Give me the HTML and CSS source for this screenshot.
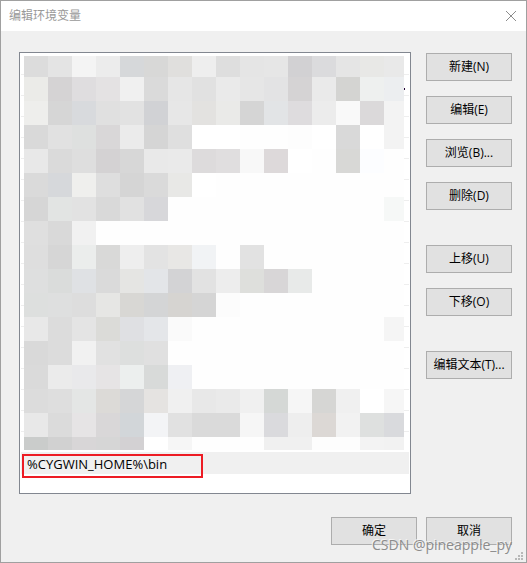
FILE: index.html
```html
<!DOCTYPE html>
<html lang="zh-CN">
<head>
    <meta charset="UTF-8">
    <title>编辑环境变量</title>
    <link rel="stylesheet" href="styles.css">
</head>
<body>
    <div class="window">
        <header class="title-bar">
            <h1>编辑环境变量</h1>
            <button type="button" class="close" aria-label="关闭">
                <svg width="12" height="12" viewBox="0 0 12 12">
                    <path d="M1 1L11 11M11 1L1 11" stroke="#8c8c8c" stroke-width="1" fill="none"/>
                </svg>
            </button>
        </header>

        <main class="content">
            <div class="list">
                <div class="hidden-rows">
                    <div class="mosaic" id="mosaic"></div>
                    <span class="speck"></span>
                </div>
                <ul class="entries">
                    <li class="selected">%CYGWIN_HOME%\bin<span class="highlight"></span></li>
                </ul>
            </div>

            <div class="actions">
                <div class="group">
                    <button type="button">新建(N)</button>
                    <button type="button">编辑(E)</button>
                    <button type="button">浏览(B)...</button>
                    <button type="button">删除(D)</button>
                </div>
                <div class="group">
                    <button type="button">上移(U)</button>
                    <button type="button">下移(O)</button>
                </div>
                <div class="group">
                    <button type="button">编辑文本(T)...</button>
                </div>
            </div>
        </main>

        <footer class="footer">
            <button type="button">确定</button>
            <button type="button">取消</button>
        </footer>

        <span class="watermark">CSDN @pineapple_py</span>
        <svg class="grip" width="8" height="8" viewBox="0 0 8 8" fill="#b8b8b8">
            <path d="M6 0h2v2h-2zM3 3h2v2h-2zM6 3h2v2h-2zM0 6h2v2h-2zM3 6h2v2h-2zM6 6h2v2h-2z"/>
        </svg>
    </div>

    <script src="mosaic.js"></script>
</body>
</html>
```
FILE: styles.css
```css
* {
    box-sizing: border-box;
}
body {
    margin: 0;
    font-family: "Open Sans", "Noto Sans CJK SC", sans-serif;
    font-size: 12px;
    line-height: 16px;
    color: #000;
}
.window {
    position: relative;
    display: flex;
    flex-direction: column;
    min-height: 100vh;
    border: 1px solid #a0a0a0;
    background-color: #f0f0f0;
}
.title-bar {
    display: flex;
    align-items: center;
    justify-content: space-between;
    height: 30px;
    padding: 0 9px 0 8px;
    background-color: #fff;
}
h1 {
    margin: 0;
    font-size: 12px;
    font-weight: normal;
    color: #999;
}
button {
    width: 86px;
    height: 28px;
    padding: 0;
    border: 1px solid #adadad;
    background-color: #e1e1e1;
    font: inherit;
    color: #000;
    white-space: nowrap;
}
button:hover {
    border-color: #0078d7;
    background-color: #e5f1fb;
}
.close,
.close:hover {
    display: flex;
    width: 12px;
    height: 12px;
    border: none;
    background: none;
}
.content {
    display: flex;
    flex: 1;
    gap: 15px;
    padding: 21px 14px 0 18px;
}
.list {
    flex: 1;
    min-width: 0;
    padding: 1px;
    border: 1px solid #828790;
    background-color: #fff;
}
.hidden-rows {
    position: relative;
    padding: 2px 5px 2px 3px;
    background: repeating-linear-gradient(#fff 0, #fff 20px, #eee 20px, #eee 21px);
}
.mosaic {
    display: grid;
    grid-template-columns: repeat(15, 24fr) 20fr;
    grid-template-rows: 21px repeat(15, 24px) 13px;
}
.speck {
    position: absolute;
    top: 34px;
    right: 4px;
    width: 1px;
    height: 2px;
    background-color: #203;
}
.entries {
    margin: 0;
    padding: 0;
    list-style: none;
}
.selected {
    position: relative;
    height: 22px;
    padding: 4px 6px;
    background-color: #f0f0f0;
    font-size: 13px;
}
.highlight {
    position: absolute;
    top: 2px;
    left: 1px;
    width: 181px;
    height: 24px;
    border: 2px solid #ed1c24;
}
.actions {
    display: flex;
    flex-direction: column;
    gap: 35px;
    padding-top: 1px;
}
.group {
    display: flex;
    flex-direction: column;
    gap: 15px;
}
.footer {
    display: flex;
    justify-content: flex-end;
    gap: 9px;
    padding: 23px 14px 17px;
}
.watermark {
    position: absolute;
    right: 14px;
    bottom: 7px;
    font-size: 14px;
    line-height: 20px;
    color: #8c8c8c;
    text-shadow: -1px -1px 0 #f4f4f4;
}
.grip {
    position: absolute;
    right: 3px;
    bottom: 2px;
}
```
FILE: mosaic.js
```js
// one line per row of blocks, missing blocks on the right are near white
const rows = [
    'dcdcdc e4e4e4 f4f4f4 ececec d6d8da d8d8d7 e0dfdd eeeeee dedede e5e5e5 e6e6e6 d2d1d3 dbdbdd e5e5e5 e8e8e6 e9e9e9',
    'ebebe8 d5d3d4 dfdddf e4e2e3 f0f0f0 dadada e6e6e6 e1e1e1 eaeaea e6e6e6 e3e3e4 d5d3d4 eaeaea d4d4d2 eef0ef eceef0',
    'eeeeec d6d6d6 d8dadd e0e0e0 e2e2e2 d1d2d5 e7e7e7 e3e2e0 eaeae8 d5d5d5 e2e4e6 dedcde ececec f9f9f9 dbd9da f3f3f3',
    'd9d9d9 e1e1e1 dee0df d9d7d8 ebebeb d5d5d5 dfdfdf ffffff ffffff fefefe fefefe fdfdfd ffffff d9d9d9 ffffff f3f3f3',
    'e8e8e8 dadada dedede d4d2d3 d7d7d7 e9e9e9 eaeaea dddbdc e0dedf f8f8f8 ddd9da ffffff fefefe d8d8d6 fcfdff fefefe',
    'dadada d6d8db efefed dedede d5d5d5 dadada e8e8e6 ffffff',
    'd6d6d6 e2e4e3 e2e2e2 d9d9d9 e1e1e1 d7d7da fefefe fefefe fefefe fefefe fefefe fefefe fefefe fefefe fefefe f6f8f7',
    'dfdfdf d9d9d9 f1f1f1',
    'dedede d6d6d6 ebedec d9d9d8 eeeeee e3e3e3 e8e7e5 f1f3f5 fefefe e2e2e2',
    'dedfdf dadcdb dfe1e4 dadada e5e5e3 e3e5e8 d3d3d5 e2e2e2 ededed dedfdc d8d6d7 e8eae9',
    'dddfde dedfdf dddddd e6e6e4 d8d7d4 d4d5d6 d6d4d1 d5d5d5 fcfcfc',
    'e8e8e8 dcdcdc e4e4e4 dbdbd8 dfe0e3 e4e6e9 fafafa fefefe fefefe fefefe fefefe fefefe fefefe fefefe fefefe f5f5f5',
    'd9d9d9 dcdcdc f1f1f1 e1e1e1 dddfde e0e0e0',
    'dadada ebebeb e9e9eb e6e4e5 ecefee d8dad9 eff0f3',
    'dcdcdc dedede e4e6e5 dcdad7 d5d6d7 e5e3e1 f0f0f0 e8e8e8 eaeaea f0f0f0 d5d8d6 f6f6f6 d6d6d4 f0f0f0 ffffff f6f6f6',
    'e8e8e8 dbdbdb e6e4e5 d9d7d8 d2d6d9 f3f4f6 e1e1e1 dadada dadada f6f6f6 dadadd eeeeee dcd8d5 f2f2f2 dee0df d9dadd',
    'cacccb d1d1d1 d8d6d7 d6d6d6 d3d1d3 ffffff f6f6f6 fefefe fefefe fefefe f0f0f0 f0f0f0 fdfdfd fdfdfd f3f3f3 f2f2f2'
];

const mosaic = document.getElementById('mosaic');

rows.forEach(row => {
    const colors = row.split(' ');
    for (let i = 0; i < 16; i++) {
        const block = document.createElement('div');
        block.style.backgroundColor = '#' + (colors[i] || 'fefefe');
        mosaic.appendChild(block);
    }
});
```
